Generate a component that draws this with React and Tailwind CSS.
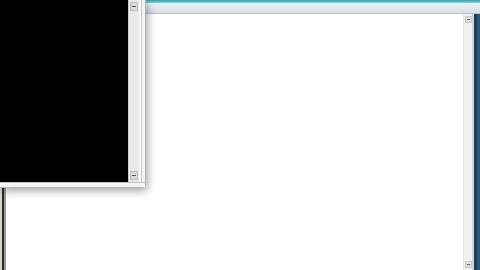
export default function App() {
  return (
    <div className="relative w-[480px] h-[270px] overflow-hidden bg-white" style={{ fontFamily: '"Liberation Sans", sans-serif' }}>
      {/* background window */}
      <div className="absolute inset-0 flex flex-col">
        <div className="h-[3px] bg-gradient-to-b from-[#3f9aa6] to-[#8fd0d6]" />
        <div className="h-[11px] bg-gradient-to-b from-[#eef2f6] to-[#d8dee8] border-b border-[#b9c3cf]" />
        <div className="flex-1 flex">
          <div className="w-[6px] flex">
            <div className="w-[2px] bg-[#d8d4c8]" />
            <div className="w-[2px] bg-[#2a2a2a]" />
            <div className="w-[2px] bg-[#9a9a9a]" />
          </div>
          <div className="flex-1 bg-white" />
          <div className="w-[9px] bg-[#f0f0f0] border-l border-[#e4e4e4] flex flex-col justify-between items-center py-[2px]">
            <div className="w-[7px] h-[7px] bg-[#e2e2e2] border border-[#c8c8c8] flex items-center justify-center">
              <div className="w-[3px] h-[1px] bg-[#666]" />
            </div>
            <div className="w-[7px] h-[7px] bg-[#e2e2e2] border border-[#c8c8c8] flex items-center justify-center">
              <div className="w-[3px] h-[1px] bg-[#666]" />
            </div>
          </div>
          <div className="w-[8px] flex">
            <div className="w-[2px] bg-[#c9d6e0]" />
            <div className="w-[3px] bg-[#1c3f5a]" />
            <div className="w-[3px] bg-[#2b5a78]" />
          </div>
        </div>
      </div>

      {/* foreground console window */}
      <div className="absolute left-0 top-0 w-[146px] h-[188px] rounded-br-[5px] bg-[#f3f3f3] border-r border-b border-[#b0b0b0] shadow-[2px_3px_8px_rgba(0,0,0,0.35)] flex flex-col">
        <div className="flex-1 flex">
          <div className="w-[128px] bg-black" />
          <div className="w-[11px] bg-[#e9e9e9] border-l border-[#d0d0d0] flex flex-col justify-between items-center py-[2px]">
            <div className="w-[8px] h-[9px] bg-[#dcdcdc] border border-[#bdbdbd] flex items-center justify-center">
              <div className="w-[4px] h-[1px] bg-[#555]" />
            </div>
            <div className="w-[8px] h-[9px] bg-[#dcdcdc] border border-[#bdbdbd] flex items-center justify-center">
              <div className="w-[4px] h-[1px] bg-[#555]" />
            </div>
          </div>
          <div className="flex-1 flex">
            <div className="w-[2px] bg-[#fafafa]" />
            <div className="w-[1px] bg-[#c4c4c4]" />
            <div className="flex-1 bg-[#f4f4f4]" />
          </div>
        </div>
        <div className="h-[5px] border-t border-[#c4c4c4] bg-[#f4f4f4]" />
      </div>
    </div>
  );
}
